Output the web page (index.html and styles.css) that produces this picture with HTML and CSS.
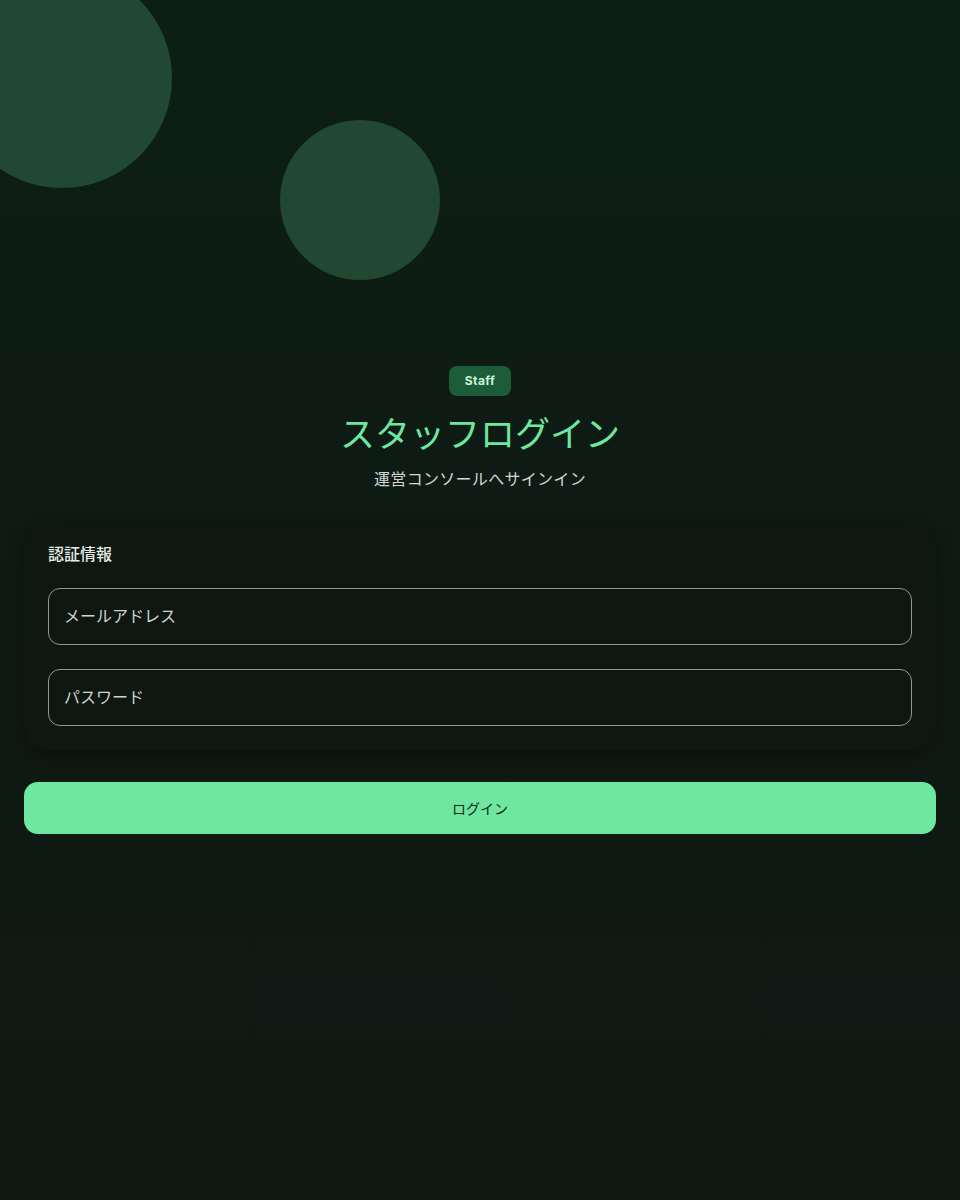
FILE: index.html
```html
<!DOCTYPE html>
<html lang="ja">
<head>
<meta charset="utf-8">
<title>スタッフログイン</title>
<link rel="stylesheet" href="styles.css">
</head>
<body>
<div class="bg">
  <div class="blob blob-a"></div>
  <div class="blob blob-b"></div>
</div>
<main class="page">
  <header class="hero">
    <span class="badge">Staff</span>
    <h1 class="title">スタッフログイン</h1>
    <p class="subtitle">運営コンソールへサインイン</p>
  </header>
  <section class="card">
    <h2 class="card-label">認証情報</h2>
    <div class="fields">
      <input class="field" type="email" placeholder="メールアドレス">
      <input class="field" type="password" placeholder="パスワード">
    </div>
  </section>
  <button class="btn" type="button">ログイン</button>
</main>
</body>
</html>
```

FILE: styles.css
```css
* { box-sizing: border-box; }
html, body { margin: 0; padding: 0; }
body {
  min-height: 1200px;
  background: linear-gradient(180deg, #0c1f14 0%, #0f1a14 50%, #101814 100%);
  font-family: "Inter", "Noto Sans CJK JP", sans-serif;
  color: #e6ece8;
  position: relative;
  overflow: hidden;
}
.bg { position: absolute; inset: 0; pointer-events: none; }
.blob { position: absolute; border-radius: 50%; background: #204832; }
.blob-a { width: 220px; height: 220px; left: -48px; top: -32px; }
.blob-b { width: 160px; height: 160px; left: 280px; top: 120px; }
.page {
  position: relative;
  padding: 366px 24px 0;
  display: flex;
  flex-direction: column;
}
.hero { display: flex; flex-direction: column; align-items: center; }
.badge {
  display: inline-block;
  height: 30px;
  line-height: 30px;
  padding: 0 16px;
  border-radius: 8px;
  background: #1d5c39;
  color: #cdf5dc;
  font-family: "Inter", sans-serif;
  font-size: 12px;
  font-weight: 700;
  letter-spacing: 0.4px;
}
.title {
  margin: 14px 0 0;
  font-family: "Noto Sans CJK JP", sans-serif;
  font-size: 35px;
  line-height: 43px;
  font-weight: 400;
  color: #6ee7a0;
}
.subtitle {
  margin: 13px 0 0;
  font-family: "Noto Sans CJK JP", sans-serif;
  font-size: 16px;
  line-height: 24px;
  letter-spacing: 0.3px;
  color: #d0d8d3;
}
.card {
  margin-top: 32px;
  background: #0f1713;
  border-radius: 24px;
  padding: 19px 24px 24px;
  box-shadow: 0 6px 20px rgba(0, 0, 0, 0.35);
}
.card-label {
  margin: 0;
  font-family: "Noto Sans CJK JP", sans-serif;
  font-size: 16px;
  line-height: 24px;
  font-weight: 500;
  color: #e6ece8;
}
.fields { margin-top: 23px; display: flex; flex-direction: column; gap: 24px; }
.field {
  display: block;
  width: 100%;
  height: 57px;
  padding: 0 15px 3px;
  border: 1px solid #8d9a92;
  border-radius: 12px;
  background: transparent;
  color: #e6ece8;
  font-family: "Noto Sans CJK JP", sans-serif;
  font-size: 16px;
  outline: none;
}
.field::placeholder { color: #cdd5d0; }
.btn {
  margin-top: 32px;
  height: 52px;
  border: 0;
  border-radius: 14px;
  background: #6ee7a0;
  color: #10291b;
  font-family: "Noto Sans CJK JP", sans-serif;
  font-size: 14px;
  font-weight: 400;
  cursor: pointer;
}
```
